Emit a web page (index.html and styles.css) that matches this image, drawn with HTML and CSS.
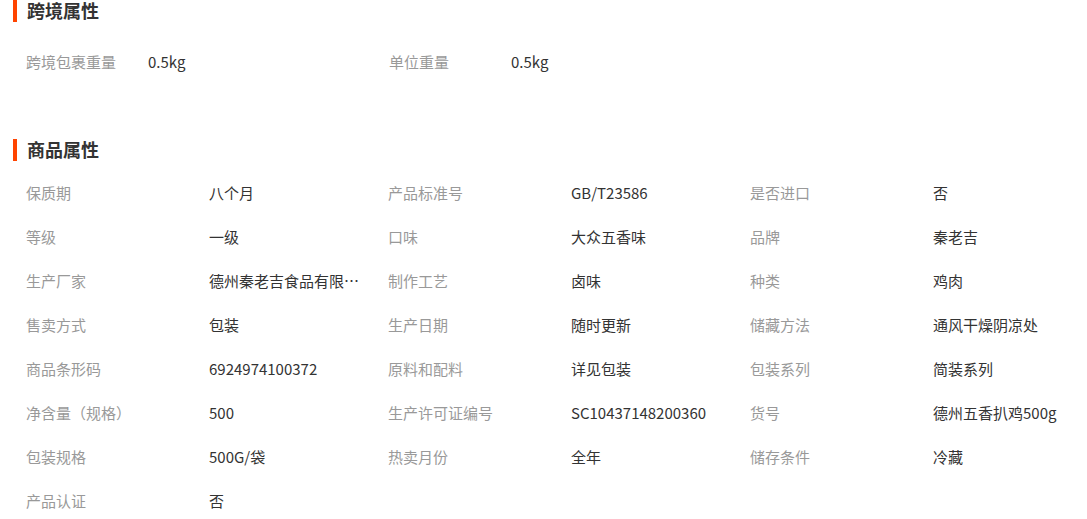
FILE: index.html
```html
<!DOCTYPE html>
<html lang="zh-CN">
<head>
  <meta charset="UTF-8">
  <title>商品属性</title>
  <link rel="stylesheet" href="styles.css">
</head>
<body>
  <div class="attrs">
    <div class="section cross">
      <h3 class="section-title">跨境属性</h3>
      <ul class="attr-list">
        <li><span class="label">跨境包裹重量</span><span class="value">0.5kg</span></li>
        <li><span class="label">单位重量</span><span class="value">0.5kg</span></li>
      </ul>
    </div>

    <div class="section goods">
      <h3 class="section-title">商品属性</h3>
      <ul class="attr-list">
        <li><span class="label">保质期</span><span class="value">八个月</span></li>
        <li><span class="label">产品标准号</span><span class="value">GB/T23586</span></li>
        <li><span class="label">是否进口</span><span class="value">否</span></li>
        <li><span class="label">等级</span><span class="value">一级</span></li>
        <li><span class="label">口味</span><span class="value">大众五香味</span></li>
        <li><span class="label">品牌</span><span class="value">秦老吉</span></li>
        <li><span class="label">生产厂家</span><span class="value" title="德州秦老吉食品有限公司">德州秦老吉食品有限公司</span></li>
        <li><span class="label">制作工艺</span><span class="value">卤味</span></li>
        <li><span class="label">种类</span><span class="value">鸡肉</span></li>
        <li><span class="label">售卖方式</span><span class="value">包装</span></li>
        <li><span class="label">生产日期</span><span class="value">随时更新</span></li>
        <li><span class="label">储藏方法</span><span class="value">通风干燥阴凉处</span></li>
        <li><span class="label">商品条形码</span><span class="value">6924974100372</span></li>
        <li><span class="label">原料和配料</span><span class="value">详见包装</span></li>
        <li><span class="label">包装系列</span><span class="value">简装系列</span></li>
        <li><span class="label">净含量（规格）</span><span class="value">500</span></li>
        <li><span class="label">生产许可证编号</span><span class="value">SC10437148200360</span></li>
        <li><span class="label">货号</span><span class="value">德州五香扒鸡500g</span></li>
        <li><span class="label">包装规格</span><span class="value">500G/袋</span></li>
        <li><span class="label">热卖月份</span><span class="value">全年</span></li>
        <li><span class="label">储存条件</span><span class="value">冷藏</span></li>
        <li><span class="label">产品认证</span><span class="value">否</span></li>
      </ul>
    </div>
  </div>
</body>
</html>
```

FILE: styles.css
```css
body {
  margin: 0;
  background: #fff;
  font-family: "Noto Sans CJK SC", "Noto Sans", sans-serif;
  font-size: 15px;
  color: #333;
}
.attrs {
  padding: 0 0 0 13px;
}
.section-title {
  margin: 0;
  height: 22px;
  line-height: 21px;
  font-size: 18px;
  font-weight: bold;
  color: #333;
  border-left: 4px solid #ff4400;
  padding-left: 10px;
}
.attr-list {
  list-style: none;
  margin: 0;
  padding: 0 0 0 13px;
  display: grid;
  grid-template-columns: repeat(3, 362px);
}
.attr-list li {
  display: flex;
  height: 44px;
  line-height: 43px;
}
.label {
  width: 183px;
  flex-shrink: 0;
  color: #999;
}
.value {
  width: 152px;
  white-space: nowrap;
  overflow: hidden;
  text-overflow: ellipsis;
  color: #333;
}
.cross .attr-list {
  margin-top: 18px;
  grid-template-columns: repeat(2, 363px);
}
.cross .label {
  width: 122px;
}
.goods {
  margin-top: 55px;
}
.goods .attr-list {
  margin-top: 10px;
}
```
